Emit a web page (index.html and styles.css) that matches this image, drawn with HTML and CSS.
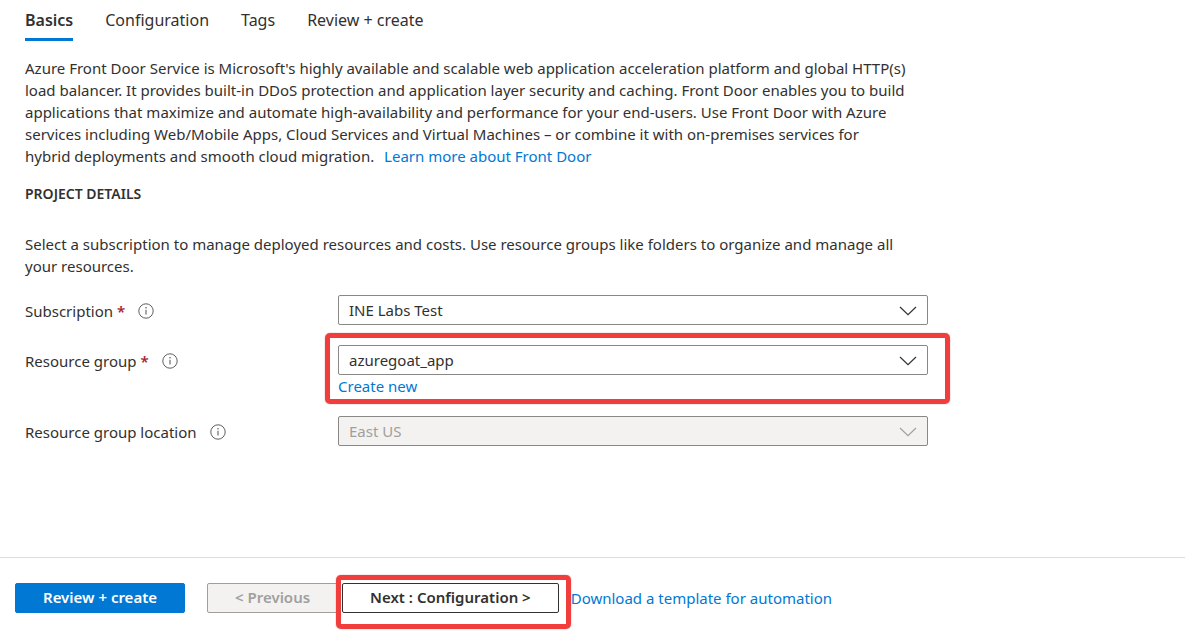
FILE: index.html
```html
<!DOCTYPE html>
<html lang="en">
<head>
<meta charset="utf-8">
<meta name="viewport" content="width=device-width, initial-scale=1">
<title>Create a Front Door</title>
<link rel="stylesheet" href="styles.css">
</head>
<body class="page">
<svg class="sprite" aria-hidden="true">
  <symbol id="info" viewBox="0 0 16 16"><circle cx="8" cy="8" r="7.2" fill="none" stroke="currentColor"/><path d="M8 6.7V11.5" stroke="currentColor" stroke-width="1.1"/><circle cx="8" cy="4.8" r="0.8" fill="currentColor"/></symbol>
  <symbol id="chevron" viewBox="0 0 18 10"><path d="M1 1L9 8.6L17 1" fill="none" stroke="currentColor" stroke-width="1.2"/></symbol>
</svg>
<main class="content">
  <nav class="tabs" aria-label="Steps">
    <button type="button" class="tab tab-active">Basics</button>
    <button type="button" class="tab">Configuration</button>
    <button type="button" class="tab">Tags</button>
    <button type="button" class="tab">Review + create</button>
  </nav>
  <p class="text">Azure Front Door Service is Microsoft's highly available and scalable web application acceleration platform and global HTTP(s) load balancer. It provides built-in DDoS protection and application layer security and caching. Front Door enables you to build applications that maximize and automate high-availability and performance for your end-users. Use Front Door with Azure services including Web/Mobile Apps, Cloud Services and Virtual Machines – or combine it with on-premises services for<br>hybrid deployments and smooth cloud migration. <a class="link learn" href="#">Learn more about Front Door</a></p>
  <h2 class="heading">PROJECT DETAILS</h2>
  <p class="text">Select a subscription to manage deployed resources and costs. Use resource groups like folders to organize and manage all your resources.</p>
  <form class="form">
    <div class="row">
      <div class="label"><label for="sub">Subscription <span class="required">*</span></label><svg class="info"><use href="#info"/></svg></div>
      <div class="select-box"><select class="select" id="sub"><option>INE Labs Test</option></select><svg class="chevron"><use href="#chevron"/></svg></div>
    </div>
    <div class="row">
      <div class="label"><label for="group">Resource group <span class="required">*</span></label><svg class="info"><use href="#info"/></svg></div>
      <div class="marked marked-group">
        <div class="select-box"><select class="select" id="group"><option>azuregoat_app</option></select><svg class="chevron"><use href="#chevron"/></svg></div>
        <a class="link create" href="#">Create new</a>
      </div>
    </div>
    <div class="row">
      <div class="label"><label for="loc">Resource group location</label><svg class="info"><use href="#info"/></svg></div>
      <div class="select-box"><select class="select" id="loc" disabled><option>East US</option></select><svg class="chevron chevron-off"><use href="#chevron"/></svg></div>
    </div>
  </form>
</main>
<footer class="footer">
  <button type="button" class="button primary">Review + create</button>
  <button type="button" class="button previous" disabled>&lt; Previous</button>
  <div class="marked marked-next"><button type="button" class="button next">Next : Configuration &gt;</button></div>
  <a class="link" href="#">Download a template for automation</a>
</footer>
</body>
</html>
```
FILE: styles.css
```css
* { box-sizing: border-box; }
.page {
  margin: 0;
  min-height: 100vh;
  display: flex;
  flex-direction: column;
  background: #fff;
  color: #323130;
  font: 15px/22px "Noto Sans", sans-serif;
}
.sprite { display: none; }
.content { flex: 1; max-width: 953px; padding: 0 25px 24px; }
.tabs { display: flex; flex-wrap: wrap; gap: 32px; margin-bottom: 16px; }
.tab {
  padding: 8px 0 6px;
  border: 0;
  border-bottom: 3px solid transparent;
  background: none;
  color: inherit;
  font: 16px/24px "Noto Sans", sans-serif;
}
.tab-active { border-bottom-color: #0078d4; font-weight: 600; }
.text { margin: 0; }
.link { color: #0078d4; text-decoration: none; }
.learn { margin-left: 6px; }
.heading { margin: 16px 0 28px; font-size: 14px; line-height: 22px; font-weight: 600; }
.form { display: grid; gap: 20px; margin-top: 18px; }
.row { display: grid; grid-template-columns: 313px minmax(0, 1fr); align-items: start; }
.label { display: flex; align-items: center; gap: 13px; min-height: 30px; padding-top: 2px; }
.required { color: #a4262c; font-weight: 600; }
.info { width: 16px; height: 16px; color: #605e5c; }
.select-box { position: relative; }
.select {
  appearance: none;
  display: block;
  width: 100%;
  height: 30px;
  padding: 0 40px 0 10px;
  border: 1px solid #8a8886;
  border-radius: 2px;
  background: #fff;
  color: #323130;
  font: 15px/22px "Noto Sans", sans-serif;
}
.select:disabled { background: #f3f2f1; color: #a19f9d; opacity: 1; }
.chevron {
  position: absolute;
  top: 11px;
  right: 11px;
  width: 18px;
  height: 10px;
  color: #323130;
  pointer-events: none;
}
.chevron-off { color: #a19f9d; }
.create { display: block; margin-top: 1px; line-height: 20px; }
.marked { position: relative; }
.marked::after {
  content: "";
  position: absolute;
  border: 5px solid #f23d3d;
  border-radius: 5px;
  box-shadow: 0 0 1px #a33;
  pointer-events: none;
}
.marked-group::after { inset: -12px -22px -8px -13px; }
.marked-next::after { inset: -8px -12px -16px -6px; }
.footer {
  display: flex;
  flex-wrap: wrap;
  align-items: center;
  padding: 25px 15px 18px;
  border-top: 1px solid #dddcdb;
}
.button {
  height: 30px;
  padding: 0 27px 2px;
  border: 1px solid #323130;
  border-radius: 2px;
  background: #fff;
  color: #323130;
  font: 600 15px/22px "Noto Sans", sans-serif;
}
.primary { margin-right: 22px; border-color: #0078d4; background: #0078d4; color: #fff; }
.previous { margin-right: 4px; border-color: #a19f9d; background: #f3f2f1; color: #a19f9d; }
.marked-next { margin-right: 12px; }
```
